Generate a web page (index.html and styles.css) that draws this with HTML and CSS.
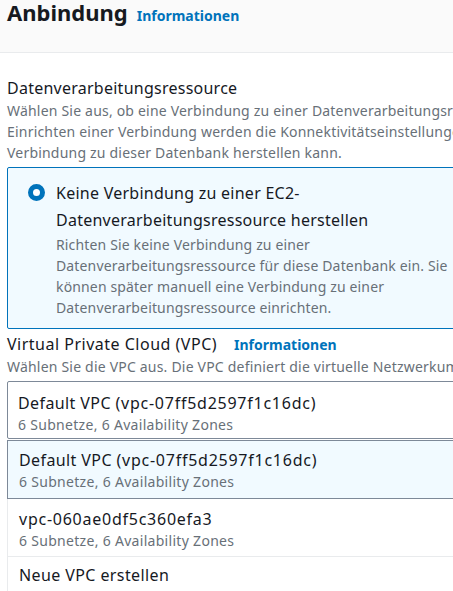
FILE: index.html
```html
<!DOCTYPE html>
<html lang="de">
<head>
<meta charset="utf-8">
<link rel="stylesheet" href="styles.css">
</head>
<body>
<div class="page">
  <div class="header">
    <h1 class="title">Anbindung</h1>
    <a class="info">Informationen</a>
  </div>
  <div class="content">
    <div class="field">
      <div class="label">Datenverarbeitungsressource</div>
      <div class="desc">Wählen Sie aus, ob eine Verbindung zu einer Datenverarbeitungsressource hergestellt werden soll. Beim<br>Einrichten einer Verbindung werden die Konnektivitätseinstellungen automatisch so konfiguriert, dass die<br>Verbindung zu dieser Datenbank herstellen kann.</div>
    </div>
    <div class="tile">
      <span class="radio"></span>
      <div class="tile-text">
        <div class="tile-title">Keine Verbindung zu einer EC2-<br>Datenverarbeitungsressource herstellen</div>
        <div class="tile-desc">Richten Sie keine Verbindung zu einer<br>Datenverarbeitungsressource für diese Datenbank ein. Sie<br>können später manuell eine Verbindung zu einer<br>Datenverarbeitungsressource einrichten.</div>
      </div>
    </div>
    <div class="vpc-head">
      <span class="label vpc-label">Virtual Private Cloud (VPC)</span>
      <a class="info small">Informationen</a>
    </div>
    <div class="desc single">Wählen Sie die VPC aus. Die VPC definiert die virtuelle Netzwerkumgebung für diese DB-Instance.</div>
    <div class="select">
      <div class="opt-main">Default VPC <span class="id">(vpc-07ff5d2597f1c16dc)</span></div>
      <div class="opt-sub">6 Subnetze, 6 Availability Zones</div>
    </div>
    <ul class="dropdown">
      <li class="item active">
        <div class="opt-main">Default VPC <span class="id">(vpc-07ff5d2597f1c16dc)</span></div>
        <div class="opt-sub">6 Subnetze, 6 Availability Zones</div>
      </li>
      <li class="item">
        <div class="opt-main"><span class="id">vpc-060ae0df5c360efa3</span></div>
        <div class="opt-sub">6 Subnetze, 6 Availability Zones</div>
      </li>
      <li class="item last">
        <div class="opt-main">Neue VPC erstellen</div>
      </li>
    </ul>
  </div>
</div>
</body>
</html>
```
FILE: styles.css
```css
html, body {
  margin: 0;
  padding: 0;
  overflow: hidden;
  background: #ffffff;
}
body {
  font-family: "Noto Sans", "Open Sans", sans-serif;
  color: #16191f;
}
.page {
  width: 560px;
}
.header {
  height: 53px;
  background: #fafafa;
  border-bottom: 1px solid #e9ebed;
  display: flex;
  align-items: baseline;
  gap: 9px;
  padding-left: 7px;
  box-sizing: border-box;
}
.title {
  margin: -1px 0 0 0;
  font-size: 22px;
  line-height: 26px;
  font-weight: 700;
  color: #16191f;
}
.info {
  color: #0073bb;
  font-weight: 700;
  font-size: 14px;
}
.content {
  padding: 24px 0 0 7px;
}
.label {
  font-size: 16px;
  line-height: 22px;
  letter-spacing: 0.25px;
  color: #16191f;
}
.vpc-label {
  letter-spacing: 0.5px;
}
.desc {
  font-size: 14px;
  line-height: 21px;
  letter-spacing: 0.2px;
  color: #687078;
  white-space: nowrap;
  margin-top: 1px;
}
.tile {
  margin-top: 4px;
  width: 520px;
  box-sizing: border-box;
  border: 1px solid #0073bb;
  border-radius: 2px;
  background: #f1faff;
  display: flex;
  gap: 11px;
  padding: 12px 0 10px 20px;
}
.radio {
  flex: none;
  width: 17px;
  height: 17px;
  box-sizing: border-box;
  border-radius: 50%;
  border: 5px solid #0073bb;
  background: #ffffff;
  margin-top: 4px;
}
.tile-title {
  font-size: 16px;
  line-height: 27px;
  letter-spacing: 0.25px;
}
.tile-desc {
  font-size: 14px;
  line-height: 21px;
  letter-spacing: 0.15px;
  color: #687078;
  white-space: nowrap;
}
.vpc-head {
  display: flex;
  align-items: baseline;
  gap: 17px;
  margin-top: 4px;
  line-height: 20px;
}
.info.small {
  font-size: 14px;
}
.desc.single {
  line-height: 18px;
  margin-top: 3px;
}
.select {
  margin-top: 5px;
  width: 520px;
  height: 58px;
  box-sizing: border-box;
  border: 1px solid #7d8998;
  border-radius: 2px;
  padding: 10px 10px 0 10px;
}
.opt-main {
  font-size: 16px;
  line-height: 22px;
  letter-spacing: 0.4px;
  color: #16191f;
}
.opt-main .id {
  letter-spacing: 0.75px;
}
.opt-sub {
  font-size: 14px;
  line-height: 22px;
  letter-spacing: 0.3px;
  color: #687078;
}
.dropdown {
  list-style: none;
  margin: 1px 0 0 0;
  padding: 0;
  width: 520px;
  border-left: 1px solid #e9ebed;
}
.item {
  height: 58px;
  box-sizing: border-box;
  padding: 9px 10px 0 11px;
  border-bottom: 1px solid #e9ebed;
}
.item.active {
  background: #f1faff;
  border-top: 1px solid #7d8998;
  border-bottom: 1px solid #7d8998;
  margin-left: -1px;
  border-left: 1px solid #7d8998;
  height: 59px;
  padding-top: 8px;
}
.item.last {
  padding-top: 7px;
}
```
